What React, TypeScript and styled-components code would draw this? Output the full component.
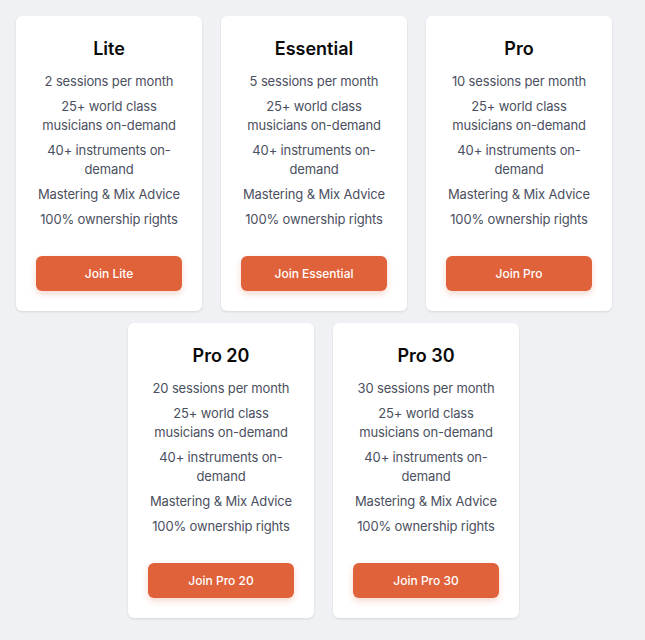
import React from "react";
import styled, { createGlobalStyle } from "styled-components";

const Global = createGlobalStyle`
  html, body { margin: 0; padding: 0; background: #f0f1f4; }
  body { font-family: Inter, "Noto Sans", sans-serif; -webkit-font-smoothing: antialiased; }
  * { box-sizing: border-box; }
`;

const Page = styled.div`
  display: flex;
  flex-direction: column;
  gap: 12px;
  padding: 16px 0 22px;
  min-height: 640px;
  background: #f0f1f4;
`;

const Row = styled.div<{ $centered?: boolean }>`
  display: flex;
  gap: 19px;
  justify-content: ${(p) => (p.$centered ? "center" : "flex-start")};
  padding-left: ${(p) => (p.$centered ? "2px" : "16px")};
`;

const Card = styled.div`
  width: 186px;
  background: #ffffff;
  border-radius: 6px;
  box-shadow: 0 1px 3px rgba(15, 23, 42, 0.08), 0 1px 2px rgba(15, 23, 42, 0.04);
  padding: 22px 20px 20px;
  display: flex;
  flex-direction: column;
  align-items: stretch;
  text-align: center;
`;

const Title = styled.h3`
  margin: 0 0 12px;
  font-size: 18px;
  line-height: 22px;
  font-weight: 600;
  color: #0a0a0a;
`;

const Features = styled.ul`
  list-style: none;
  margin: 0 0 27px;
  padding: 0;
  display: flex;
  flex-direction: column;
  gap: 6px;
`;

const Feature = styled.li`
  font-size: 13px;
  line-height: 19px;
  letter-spacing: -0.15px;
  color: #4b5060;
`;

const JoinButton = styled.button`
  height: 35px;
  width: 100%;
  border: none;
  border-radius: 6px;
  background: #e0623a;
  color: #ffffff;
  font-family: Inter, "Noto Sans", sans-serif;
  font-size: 12px;
  font-weight: 500;
  box-shadow: 0 3px 6px rgba(224, 98, 58, 0.25);
  cursor: pointer;
`;

type Plan = { name: string; sessions: number };

const plans: Plan[] = [
  { name: "Lite", sessions: 2 },
  { name: "Essential", sessions: 5 },
  { name: "Pro", sessions: 10 },
  { name: "Pro 20", sessions: 20 },
  { name: "Pro 30", sessions: 30 },
];

const PlanCard = ({ plan }: { plan: Plan }) => (
  <Card>
    <Title>{plan.name}</Title>
    <Features>
      <Feature>{plan.sessions} sessions per month</Feature>
      <Feature>25+ world class musicians on-demand</Feature>
      <Feature>40+ instruments on-demand</Feature>
      <Feature>Mastering &amp; Mix Advice</Feature>
      <Feature>100% ownership rights</Feature>
    </Features>
    <JoinButton>Join {plan.name}</JoinButton>
  </Card>
);

export default function App() {
  return (
    <>
      <Global />
      <Page>
        <Row>
          {plans.slice(0, 3).map((p) => (
            <PlanCard key={p.name} plan={p} />
          ))}
        </Row>
        <Row $centered>
          {plans.slice(3).map((p) => (
            <PlanCard key={p.name} plan={p} />
          ))}
        </Row>
      </Page>
    </>
  );
}
